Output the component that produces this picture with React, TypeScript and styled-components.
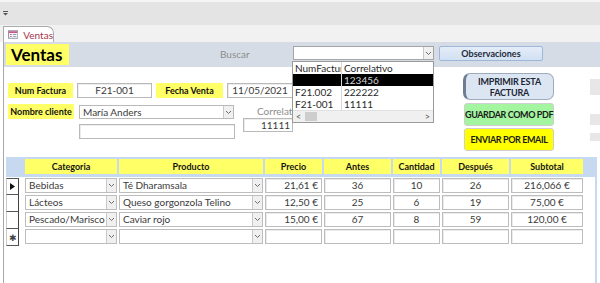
import React from "react";
import styled, { createGlobalStyle } from "styled-components";

const Global = createGlobalStyle`
  html, body { margin: 0; padding: 0; width: 600px; height: 283px; overflow: hidden; background: #fff; }
  body { font-family: Lato, "Liberation Sans", sans-serif; font-size: 10px; color: #3a3a3a; }
  * { box-sizing: border-box; }
`;

const COLS = "17px 92px 144px 57px 67px 47px 67px 72px";

const Page = styled.div`
  width: 600px;
  height: 283px;
  display: flex;
  flex-direction: column;
  overflow: hidden;
  font-family: Lato, "Liberation Sans", sans-serif;
`;

const Ribbon = styled.div`
  height: 25px;
  flex: 0 0 25px;
  background: #e4e4e4;
  border-top: 2px solid #f5f5f5;
  display: flex;
  align-items: center;
  padding-left: 3px;
`;

const TabStrip = styled.div`
  height: 17px;
  flex: 0 0 17px;
  background: #f1f1f1;
  display: flex;
  align-items: flex-end;
  padding-left: 3px;
`;

const Tab = styled.div`
  width: 51px;
  height: 16px;
  background: #fff;
  border: 1px solid #ababab;
  border-bottom: none;
  border-top-right-radius: 7px;
  display: flex;
  align-items: center;
  padding-left: 4px;
  gap: 5px;
  color: #a8344a;
  font-size: 10px;
`;

const FormArea = styled.div`
  flex: 1;
  margin-left: 3px;
  border-left: 1px solid #a8a8a8;
  display: flex;
  flex-direction: column;
  min-height: 0;
`;

const Header = styled.div`
  height: 25px;
  flex: 0 0 25px;
  background: #d6dce5;
  display: flex;
  align-items: flex-start;
`;

const Title = styled.div`
  margin: 2px 0 0 2px;
  width: 63px;
  height: 21px;
  background: #ffff66;
  color: #000;
  font-weight: 700;
  font-size: 17px;
  line-height: 21px;
  padding-left: 5px;
`;

const SearchLabel = styled.div`
  margin: 5px 0 0 151px;
  width: 73px;
  color: #8c8c8c;
  font-size: 10px;
  line-height: 14px;
`;

const SearchCombo = styled.div`
  position: relative;
  margin-top: 4px;
  width: 141px;
  height: 14px;
  background: #fff;
  border: 1px solid #a5a5a5;
  display: flex;
  justify-content: flex-end;
`;

const DropBtn = styled.div`
  width: 10px;
  height: 100%;
  background: #f0f0f0;
  border-left: 1px solid #c8c8c8;
  display: flex;
  align-items: center;
  justify-content: center;
`;

const DropList = styled.div`
  position: absolute;
  z-index: 10;
  top: 14px;
  left: -2px;
  width: 142px;
  height: 62px;
  background: #fff;
  border: 1px solid #9a9a9a;
  display: flex;
  flex-direction: column;
  font-size: 10px;
  color: #2a2a2a;
`;

const ListRow = styled.div<{ $selected?: boolean }>`
  height: 12px;
  display: grid;
  grid-template-columns: 49px 1fr;
  background: ${(p) => (p.$selected ? "#000" : "transparent")};
  color: ${(p) => (p.$selected ? "#d4d4d4" : "#2a2a2a")};
  line-height: 12px;
`;

const ListCell = styled.div`
  padding-left: 2px;
  overflow: hidden;
  white-space: nowrap;
  border-right: 1px solid #d8d8d8;
  &:last-child { border-right: none; }
`;

const HScroll = styled.div`
  margin-top: auto;
  height: 12px;
  background: #f0f0f0;
  border-top: 1px solid #e0e0e0;
  display: flex;
  align-items: center;
  padding: 0 3px;
  color: #555;
  font-size: 9px;
`;

const Thumb = styled.div`
  margin-left: 4px;
  width: 12px;
  height: 9px;
  background: #cdcdcd;
`;

const ObsButton = styled.div`
  margin: 4px 0 0 5px;
  width: 104px;
  height: 15px;
  background: linear-gradient(#e4edf8, #d2e0f2);
  border: 1px solid #9db7da;
  border-radius: 2px;
  font-weight: 700;
  color: #1e2a3c;
  text-align: center;
  line-height: 13px;
  font-size: 9px;
`;

const Detail = styled.div`
  height: 90px;
  flex: 0 0 90px;
  display: flex;
  align-items: flex-start;
`;

const Fields = styled.div`
  margin-left: 4px;
  padding-top: 16px;
  width: 310px;
  display: flex;
  flex-direction: column;
`;

const FieldRow = styled.div<{ $mt?: number }>`
  display: flex;
  align-items: flex-start;
  margin-top: ${(p) => p.$mt ?? 0}px;
`;

const YLabel = styled.div<{ $w: number; $ml?: number }>`
  width: ${(p) => p.$w}px;
  margin-left: ${(p) => p.$ml ?? 0}px;
  height: 15px;
  background: #ffff66;
  color: #111;
  font-weight: 700;
  font-size: 9px;
  line-height: 15px;
  text-align: center;
  white-space: nowrap;
`;

const TextBox = styled.div<{ $w: number; $ml?: number; $mt?: number; $h?: number; $align?: string }>`
  width: ${(p) => p.$w}px;
  height: ${(p) => p.$h ?? 15}px;
  margin-left: ${(p) => p.$ml ?? 0}px;
  margin-top: ${(p) => p.$mt ?? 0}px;
  background: #fff;
  border: 1px solid #b9b9b9;
  box-shadow: inset 1px 1px 0 #ececec;
  color: #3a3a3a;
  text-align: ${(p) => p.$align ?? "center"};
  padding: 0 2px;
  font-size: 10px;
  line-height: 13px;
  white-space: nowrap;
  overflow: hidden;
`;

const ComboBox = styled.div<{ $w: number; $mt?: number }>`
  width: ${(p) => p.$w}px;
  height: 14px;
  margin-top: ${(p) => p.$mt ?? 0}px;
  background: #fff;
  border: 1px solid #b9b9b9;
  display: flex;
  color: #3a3a3a;
  font-size: 10px;
  line-height: 12px;
`;

const ComboText = styled.div`
  flex: 1;
  padding-left: 3px;
  white-space: nowrap;
  overflow: hidden;
`;

const ClientGrid = styled.div`
  display: grid;
  grid-template-columns: 71px 156px;
  align-items: start;
`;

const CorrCol = styled.div`
  margin-left: 8px;
  display: flex;
  flex-direction: column;
`;

const GrayLabel = styled.div`
  width: 49px;
  height: 13px;
  margin-top: 1px;
  padding-left: 14px;
  color: #8c8c8c;
  font-size: 10px;
  line-height: 13px;
  white-space: nowrap;
  overflow: hidden;
`;

const Buttons = styled.div`
  margin-left: 148px;
  padding-top: 6px;
  display: flex;
  flex-direction: column;
`;

const PrintButton = styled.div`
  width: 91px;
  height: 27px;
  background: #dce6f2;
  border: 1px solid #9eabbd;
  border-left: 3px solid #6f7d92;
  border-radius: 7px;
  color: #1c2636;
  font-weight: 700;
  font-size: 9px;
  letter-spacing: -0.2px;
  line-height: 11px;
  text-align: center;
  padding-top: 2px;
`;

const ColorButton = styled.div<{ $bg: string; $mt: number }>`
  margin: ${(p) => p.$mt}px 0 0 1px;
  width: 90px;
  height: 23px;
  background: ${(p) => p.$bg};
  border: 1px solid #cfcfcf;
  border-radius: 3px;
  color: #1a1a1a;
  font-weight: 700;
  font-size: 9px;
  letter-spacing: -0.4px;
  line-height: 21px;
  text-align: center;
  white-space: nowrap;
`;

const Stubs = styled.div`
  margin-left: 36px;
  display: flex;
  flex-direction: column;
`;

const Stub = styled.div<{ $mt: number; $h: number }>`
  margin-top: ${(p) => p.$mt}px;
  width: 10px;
  height: ${(p) => p.$h}px;
  background: #e7e7e7;
`;

const Subform = styled.div`
  margin-left: 2px;
  width: 591px;
  flex: 1;
  border-right: 2px solid #c6d9f1;
  display: flex;
  flex-direction: column;
`;

const HeaderBar = styled.div`
  height: 20px;
  background: #c6d9f1;
  display: grid;
  grid-template-columns: ${COLS};
  column-gap: 2px;
  align-items: start;
  padding-top: 2px;
`;

const ColHead = styled.div`
  height: 15px;
  background: #ffff66;
  color: #151515;
  font-weight: 700;
  font-size: 9px;
  line-height: 15px;
  text-align: center;
`;

const Rows = styled.div`
  padding-top: 1px;
  display: flex;
  flex-direction: column;
`;

const Row = styled.div`
  display: grid;
  grid-template-columns: ${COLS};
  column-gap: 2px;
  height: 17px;
`;

const Selector = styled.div<{ $first?: boolean }>`
  width: 13px;
  height: 17px;
  background: #fff;
  border-left: 1px solid #c9c9c9;
  border-right: 1px solid #444;
  border-bottom: 1px solid #555;
  border-top: ${(p) => (p.$first ? "1px solid #555" : "none")};
  display: flex;
  align-items: center;
  justify-content: center;
  color: #444;
  font-size: 9px;
  line-height: 9px;
`;

const Cell = styled.div<{ $align?: string }>`
  height: 15px;
  background: #fff;
  border: 1px solid #bdbdbd;
  box-shadow: inset 1px 1px 0 #ebebeb;
  color: #3a3a3a;
  font-size: 10px;
  line-height: 13px;
  text-align: ${(p) => p.$align ?? "center"};
  padding: 0 3px;
  white-space: nowrap;
  overflow: hidden;
`;

const ComboCell = styled.div`
  height: 15px;
  background: #fff;
  border: 1px solid #bdbdbd;
  display: flex;
  color: #3a3a3a;
  font-size: 10px;
  line-height: 13px;
`;

const Chevron = () => (
  <svg width="7" height="5" viewBox="0 0 7 5">
    <path d="M1 1l2.5 2.5L6 1" fill="none" stroke="#6e6e6e" strokeWidth="1" />
  </svg>
);

const FormIcon = () => (
  <svg width="11" height="9" viewBox="0 0 11 9">
    <rect x="0.5" y="0.5" width="10" height="8" fill="#fff" stroke="#8a8fa3" />
    <rect x="1" y="1" width="9" height="2" fill="#c55a8a" />
    <rect x="2" y="4" width="2" height="1" fill="#c55a8a" />
    <rect x="5" y="4" width="4" height="1" fill="#8e9ab3" />
    <rect x="2" y="6" width="2" height="1" fill="#c55a8a" />
    <rect x="5" y="6" width="4" height="1" fill="#8e9ab3" />
  </svg>
);

const QuickIcon = () => (
  <svg width="5" height="5" viewBox="0 0 5 5">
    <rect x="0" y="0" width="5" height="1" fill="#555" />
    <path d="M0 2h5L2.5 4.5z" fill="#555" />
  </svg>
);

const Triangle = () => (
  <svg width="5" height="7" viewBox="0 0 5 7">
    <path d="M0 0l5 3.5L0 7z" fill="#111" />
  </svg>
);

type Line = {
  cat: string;
  prod: string;
  precio: string;
  antes: string;
  cant: string;
  desp: string;
  sub: string;
};

const lines: Line[] = [
  { cat: "Bebidas", prod: "Té Dharamsala", precio: "21,61 €", antes: "36", cant: "10", desp: "26", sub: "216,066 €" },
  { cat: "Lácteos", prod: "Queso gorgonzola Telino", precio: "12,50 €", antes: "25", cant: "6", desp: "19", sub: "75,00 €" },
  { cat: "Pescado/Marisco", prod: "Caviar rojo", precio: "15,00 €", antes: "67", cant: "8", desp: "59", sub: "120,00 €" },
  { cat: "", prod: "", precio: "", antes: "", cant: "", desp: "", sub: "" },
];

const Combo: React.FC<{ text: string }> = ({ text }) => (
  <ComboCell>
    <ComboText>{text}</ComboText>
    <DropBtn>
      <Chevron />
    </DropBtn>
  </ComboCell>
);

export default function App() {
  return (
    <>
      <Global />
      <Page>
        <Ribbon>
          <QuickIcon />
        </Ribbon>
        <TabStrip>
          <Tab>
            <FormIcon />
            <span>Ventas</span>
          </Tab>
        </TabStrip>
        <FormArea>
          <Header>
            <Title>Ventas</Title>
            <SearchLabel>Buscar</SearchLabel>
            <SearchCombo>
              <DropBtn>
                <Chevron />
              </DropBtn>
              <DropList>
                <ListRow>
                  <ListCell>NumFactura</ListCell>
                  <ListCell>Correlativo</ListCell>
                </ListRow>
                <ListRow $selected>
                  <ListCell></ListCell>
                  <ListCell>123456</ListCell>
                </ListRow>
                <ListRow>
                  <ListCell>F21.002</ListCell>
                  <ListCell>222222</ListCell>
                </ListRow>
                <ListRow>
                  <ListCell>F21-001</ListCell>
                  <ListCell>11111</ListCell>
                </ListRow>
                <HScroll>
                  <span>&lt;</span>
                  <Thumb />
                  <span style={{ marginLeft: "auto" }}>&gt;</span>
                </HScroll>
              </DropList>
            </SearchCombo>
            <ObsButton>Observaciones</ObsButton>
          </Header>
          <Detail>
            <Fields>
              <FieldRow>
                <YLabel $w={65}>Num Factura</YLabel>
                <TextBox $w={75} $ml={4}>F21-001</TextBox>
                <YLabel $w={67} $ml={4}>Fecha Venta</YLabel>
                <TextBox $w={66} $ml={4}>11/05/2021</TextBox>
              </FieldRow>
              <FieldRow $mt={6}>
                <ClientGrid>
                  <YLabel $w={66}>Nombre cliente</YLabel>
                  <ComboBox $w={155} $mt={1}>
                    <ComboText>María Anders</ComboText>
                    <DropBtn>
                      <Chevron />
                    </DropBtn>
                  </ComboBox>
                  <span />
                  <TextBox $w={156} $mt={5} />
                </ClientGrid>
                <CorrCol>
                  <GrayLabel>Correlativo</GrayLabel>
                  <TextBox $w={50} $h={14} $align="right">11111</TextBox>
                </CorrCol>
              </FieldRow>
            </Fields>
            <Buttons>
              <PrintButton>
                IMPRIMIR ESTA
                <br />
                FACTURA
              </PrintButton>
              <ColorButton $bg="#a3f5a0" $mt={3}>GUARDAR COMO PDF</ColorButton>
              <ColorButton $bg="#ffff00" $mt={2}>ENVIAR POR EMAIL</ColorButton>
            </Buttons>
            <Stubs>
              <Stub $mt={12} $h={16} />
              <Stub $mt={19} $h={11} />
              <Stub $mt={8} $h={8} />
            </Stubs>
          </Detail>
          <Subform>
            <HeaderBar>
              <span />
              <ColHead>Categoria</ColHead>
              <ColHead>Producto</ColHead>
              <ColHead>Precio</ColHead>
              <ColHead>Antes</ColHead>
              <ColHead>Cantidad</ColHead>
              <ColHead>Después</ColHead>
              <ColHead>Subtotal</ColHead>
            </HeaderBar>
            <Rows>
              {lines.map((l, i) => (
                <Row key={i}>
                  <Selector $first={i === 0}>
                    {i === 0 ? <Triangle /> : i === lines.length - 1 ? "✱" : null}
                  </Selector>
                  <Combo text={l.cat} />
                  <Combo text={l.prod} />
                  <Cell $align="right">{l.precio}</Cell>
                  <Cell>{l.antes}</Cell>
                  <Cell>{l.cant}</Cell>
                  <Cell>{l.desp}</Cell>
                  <Cell>{l.sub}</Cell>
                </Row>
              ))}
            </Rows>
          </Subform>
        </FormArea>
      </Page>
    </>
  );
}
